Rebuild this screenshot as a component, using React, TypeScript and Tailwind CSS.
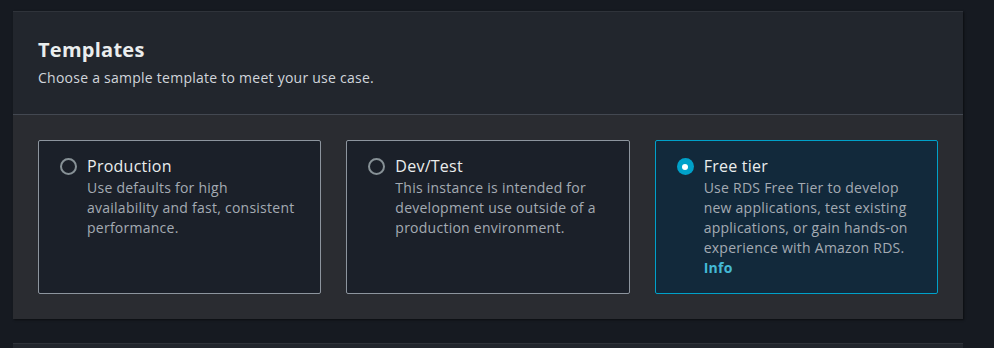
const templates = [
  {
    id: "production",
    title: "Production",
    desc: "Use defaults for high availability and fast, consistent performance.",
  },
  {
    id: "devtest",
    title: "Dev/Test",
    desc: "This instance is intended for development use outside of a production environment.",
  },
  {
    id: "free",
    title: "Free tier",
    desc: "Use RDS Free Tier to develop new applications, test existing applications, or gain hands-on experience with Amazon RDS.",
    info: true,
  },
];

const Radio = ({ checked }: { checked: boolean }) =>
  checked ? (
    <span className="mt-[4px] flex size-[17px] shrink-0 items-center justify-center rounded-full bg-[#00a1c9]">
      <span className="size-[6px] rounded-full bg-white" />
    </span>
  ) : (
    <span className="mt-[4px] size-[17px] shrink-0 rounded-full border-2 border-[#879196]" />
  );

export default function App() {
  const selected = "free";
  return (
    <div className="h-[348px] w-[994px] overflow-hidden bg-[#161a21] pt-[11px] pl-[13px] font-['Open_Sans',sans-serif] tracking-[0.25px]">
      <div className="w-[950px] border-t border-[#2f333a] shadow-[1px_1px_2px_rgba(0,0,0,0.5)]">
        {/* Header */}
        <div className="border-b border-[#434851] bg-[#22262d] px-[25px] pt-[25px] pb-[26px]">
          <h2 className="text-[20px] leading-[26px] font-bold text-[#eaeded]">Templates</h2>
          <p className="mt-[5px] text-[14px] leading-[20px] text-[#d1d5db]">
            Choose a sample template to meet your use case.
          </p>
        </div>
        {/* Options */}
        <div className="grid grid-cols-3 gap-[25px] bg-[#2a2c31] px-[25px] pt-[25px] pb-[25px]">
          {templates.map((t) => {
            const on = t.id === selected;
            return (
              <div
                key={t.id}
                className={`flex h-[154px] gap-[10px] rounded-[2px] border px-[21px] pt-[13px] ${
                  on ? "border-[#00a1c9] bg-[#12293b]" : "border-[#8d959e] bg-[#1b2029]"
                }`}
              >
                <Radio checked={on} />
                <div>
                  <div className="text-[16px] leading-[24px] text-[#eaeded]">{t.title}</div>
                  <div className="text-[14px] leading-[20px] text-[#a4abb3]">{t.desc}</div>
                  {t.info && (
                    <div className="text-[14px] leading-[20px] font-bold text-[#44b9d6]">Info</div>
                  )}
                </div>
              </div>
            );
          })}
        </div>
      </div>
      <div className="mt-[24px] h-[20px] w-[950px] border-t border-[#2f333a] bg-[#22262d]" />
    </div>
  );
}
